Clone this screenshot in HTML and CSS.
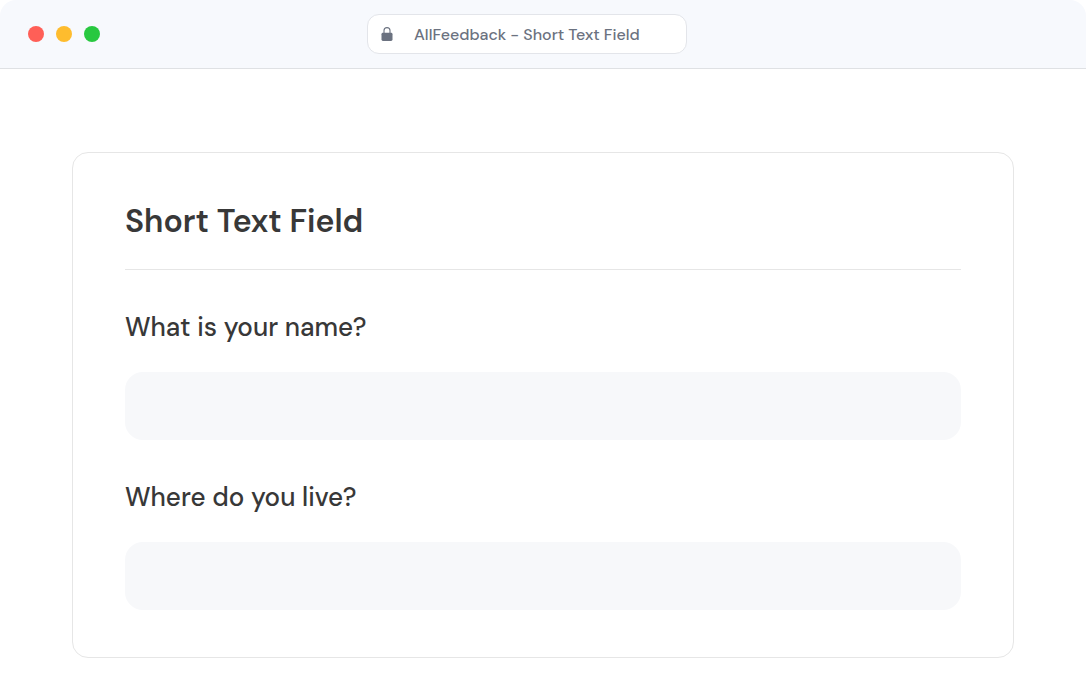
FILE: index.html
```html
<!DOCTYPE html>
<html lang="en">
<head>
    <meta charset="UTF-8">
    <meta name="viewport" content="width=device-width, initial-scale=1.0">
    <title>AllFeedback - Short Text Field</title>
    <link rel="stylesheet" href="styles.css">
</head>
<body>
    <div class="window">
        <header class="title-bar">
            <div class="controls">
                <span class="dot close"></span>
                <span class="dot minimize"></span>
                <span class="dot expand"></span>
            </div>
            <div class="address">
                <svg class="lock" viewBox="0 0 12 16" aria-hidden="true">
                    <path d="M3 7.5V4.6a3 3 0 0 1 6 0V7.5" fill="none" stroke="currentColor" stroke-width="1.1"/>
                    <rect x="0.5" y="6.8" width="11" height="8.2" rx="1.4" fill="currentColor"/>
                </svg>
                <span class="address-text">AllFeedback - Short Text Field</span>
            </div>
        </header>
        <main class="content">
            <form class="card">
                <h1>Short Text Field</h1>
                <label class="question" for="name">What is your name?</label>
                <input class="field" id="name" type="text">
                <label class="question" for="city">Where do you live?</label>
                <input class="field" id="city" type="text">
            </form>
        </main>
    </div>
</body>
</html>
```

FILE: styles.css
```css
* {
    box-sizing: border-box;
}
body {
    margin: 0;
    font-family: 'DM Sans', 'Inter', sans-serif;
    background: #ffffff;
    color: #383838;
}
.window {
    height: 690px;
    overflow: hidden;
}
.title-bar {
    display: grid;
    grid-template-columns: 339px 320px 1fr;
    align-items: center;
    height: 69px;
    padding: 0 28px 1px;
    background: #f7f9fd;
    border-bottom: 1px solid #dfe1e4;
    border-radius: 16px 16px 0 0;
}
.controls {
    display: flex;
    gap: 12px;
}
.dot {
    width: 16px;
    height: 16px;
    border-radius: 50%;
}
.close {
    background: #ff5f57;
}
.minimize {
    background: #febc2e;
}
.expand {
    background: #28c840;
}
.address {
    display: flex;
    align-items: center;
    height: 40px;
    padding-left: 13px;
    background: #ffffff;
    border: 1px solid #e3e5ea;
    border-radius: 12px;
    color: #6b7280;
}
.lock {
    width: 12px;
    height: 16px;
    margin-right: 21px;
}
.address-text {
    padding-top: 1px;
    font-size: 16px;
    font-weight: 500;
    line-height: 21px;
    white-space: nowrap;
}
.content {
    padding: 83px 72px 0;
}
.card {
    height: 506px;
    padding: 44px 52px 0;
    border: 1px solid #e6e6e6;
    border-radius: 16px;
}
h1 {
    height: 73px;
    margin: 0;
    font-size: 32px;
    font-weight: 600;
    line-height: 48px;
    border-bottom: 1px solid #e6e6e6;
}
.question {
    display: block;
    margin: 39px 0 27px;
    font-size: 26px;
    font-weight: 500;
    line-height: 36px;
}
.field {
    display: block;
    width: 100%;
    height: 68px;
    padding: 0 20px;
    font: inherit;
    font-size: 24px;
    color: inherit;
    background: #f7f8fa;
    border: none;
    border-radius: 18px;
}
```
